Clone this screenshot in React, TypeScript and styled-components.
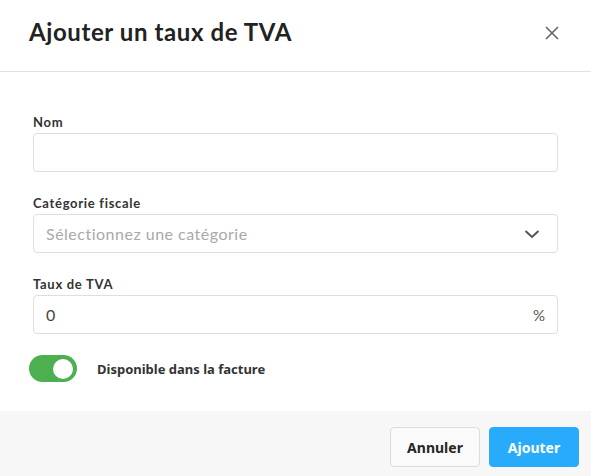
import React from "react"
import styled, { createGlobalStyle } from "styled-components"

const GlobalStyle = createGlobalStyle`
  html, body {
    margin: 0;
    padding: 0;
    background: #fff;
  }
  * {
    box-sizing: border-box;
  }
`

const Modal = styled.div`
  width: 591px;
  height: 476px;
  display: flex;
  flex-direction: column;
  background: #fff;
  overflow: hidden;
`

const Header = styled.div`
  height: 72px;
  flex-shrink: 0;
  display: flex;
  align-items: center;
  justify-content: space-between;
  padding: 0 29px;
  border-bottom: 1px solid #e2e2e2;
`

const Title = styled.h2`
  margin: 0 0 8px 0;
  font-family: Lato, "Liberation Sans", sans-serif;
  font-weight: 700;
  font-size: 24px;
  color: #222;
  letter-spacing: 0.6px;
`

const CloseButton = styled.button`
  border: 0;
  background: none;
  padding: 0;
  width: 16px;
  height: 16px;
  display: flex;
  align-items: center;
  justify-content: center;
  margin: 0 2px 5px 0;
  cursor: pointer;
`

const Body = styled.div`
  flex: 1;
  padding: 42px 33px 0 33px;
  display: flex;
  flex-direction: column;
  gap: 23px;
`

const Field = styled.div`
  display: flex;
  flex-direction: column;
  gap: 3px;
`

const Label = styled.label`
  font-family: Lato, "Liberation Sans", sans-serif;
  font-weight: 700;
  font-size: 13px;
  line-height: 16px;
  color: #333;
  letter-spacing: 0.7px;
`

const InputBox = styled.div`
  height: 39px;
  border: 1px solid #dedede;
  border-radius: 4px;
  display: flex;
  align-items: center;
  justify-content: space-between;
  padding: 0 12px;
  font-family: Lato, "Liberation Sans", sans-serif;
  font-size: 16px;
`

const Value = styled.span<{ $muted?: boolean }>`
  color: ${(p) => (p.$muted ? "#a9a9a9" : "#444")};
  letter-spacing: ${(p) => (p.$muted ? "0.5px" : "0")};
`

const Suffix = styled.span`
  color: #555;
  font-size: 15px;
`

const ToggleRow = styled.div`
  display: flex;
  align-items: center;
  gap: 20px;
  margin-left: -4px;
  margin-top: -2px;
`

const Toggle = styled.div<{ $on: boolean }>`
  width: 48px;
  height: 27px;
  border-radius: 14px;
  background: ${(p) => (p.$on ? "#4caf50" : "#ccc")};
  display: flex;
  align-items: center;
  justify-content: ${(p) => (p.$on ? "flex-end" : "flex-start")};
  padding: 0 4px;
`

const Knob = styled.div`
  width: 20px;
  height: 20px;
  border-radius: 50%;
  background: #fff;
`

const ToggleLabel = styled.span`
  font-family: "Noto Sans", "Liberation Sans", sans-serif;
  font-weight: 700;
  font-size: 13px;
  color: #333;
`

const Footer = styled.div`
  height: 65px;
  flex-shrink: 0;
  background: #f7f7f7;
  display: flex;
  justify-content: flex-end;
  align-items: flex-start;
  gap: 9px;
  padding: 16px 12px 0 0;
`

const Button = styled.button<{ $primary?: boolean }>`
  height: 40px;
  width: 90px;
  border-radius: 4px;
  border: 1px solid ${(p) => (p.$primary ? "#29abfb" : "#dcdcdc")};
  background: ${(p) => (p.$primary ? "#29abfb" : "#fafafa")};
  color: ${(p) => (p.$primary ? "#fff" : "#262626")};
  font-family: "Noto Sans", "Liberation Sans", sans-serif;
  font-weight: 700;
  font-size: 14px;
  cursor: pointer;
`

const App = (): JSX.Element => {
  return (
    <Modal>
      <GlobalStyle />
      <Header>
        <Title>Ajouter un taux de TVA</Title>
        <CloseButton aria-label="Fermer">
          <svg width="14" height="14" viewBox="0 0 14 14">
            <path d="M1 1L13 13M13 1L1 13" stroke="#666" strokeWidth="1.6" />
          </svg>
        </CloseButton>
      </Header>

      <Body>
        <Field>
          <Label>Nom</Label>
          <InputBox />
        </Field>

        <Field>
          <Label>Catégorie fiscale</Label>
          <InputBox>
            <Value $muted>Sélectionnez une catégorie</Value>
            <svg width="16" height="10" viewBox="0 0 16 10" style={{ marginRight: 5 }}>
              <path d="M1.5 2L8 8L14.5 2" stroke="#555" strokeWidth="2" fill="none" />
            </svg>
          </InputBox>
        </Field>

        <Field>
          <Label>Taux de TVA</Label>
          <InputBox>
            <Value>0</Value>
            <Suffix>%</Suffix>
          </InputBox>
        </Field>

        <ToggleRow>
          <Toggle $on>
            <Knob />
          </Toggle>
          <ToggleLabel>Disponible dans la facture</ToggleLabel>
        </ToggleRow>
      </Body>

      <Footer>
        <Button>Annuler</Button>
        <Button $primary>Ajouter</Button>
      </Footer>
    </Modal>
  )
}

export default App
